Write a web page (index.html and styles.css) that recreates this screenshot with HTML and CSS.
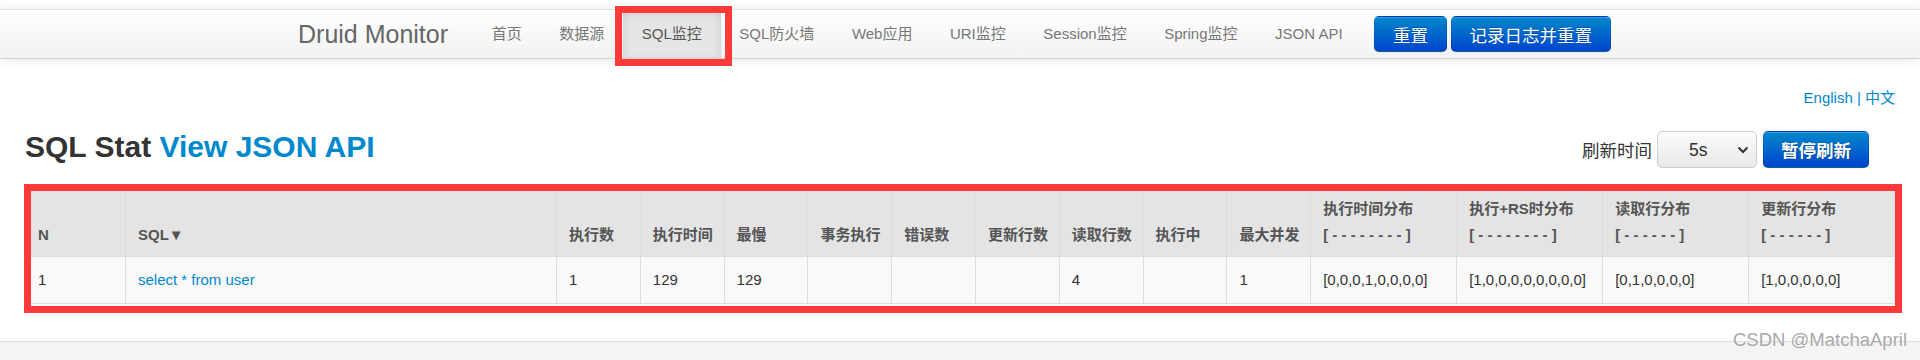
FILE: index.html
```html
<!DOCTYPE html>
<html lang="zh-CN">
<head>
<meta charset="utf-8">
<title>Druid Monitor</title>
<link rel="stylesheet" href="styles.css">
</head>
<body>
<div class="navbar">
  <div class="nav-container">
    <a class="brand" href="#">Druid Monitor</a>
    <ul class="nav">
      <li><a href="#">首页</a></li>
      <li><a href="#">数据源</a></li>
      <li class="active"><a href="#">SQL监控</a></li>
      <li><a href="#">SQL防火墙</a></li>
      <li><a href="#">Web应用</a></li>
      <li><a href="#">URI监控</a></li>
      <li><a href="#">Session监控</a></li>
      <li><a href="#">Spring监控</a></li>
      <li><a href="#">JSON API</a></li>
    </ul>
    <div class="nav-actions">
      <button class="btn btn-primary">重置</button>
      <button class="btn btn-primary">记录日志并重置</button>
    </div>
  </div>
</div>

<div class="content">
  <div class="lang"><a href="#">English</a> | <a href="#">中文</a></div>
  <div class="title-row">
    <h3 class="title">SQL Stat <a href="#">View JSON API</a></h3>
    <div class="refresh">
      <span class="refresh-label">刷新时间</span>
      <span class="select-wrap">
        <select class="select"><option>5s</option></select>
        <svg class="chevron" width="12" height="8" viewBox="0 0 12 8"><path d="M1.5 1.5 L6 6 L10.5 1.5" fill="none" stroke="#333" stroke-width="2"/></svg>
      </span>
      <button class="btn btn-primary btn-bold">暂停刷新</button>
    </div>
  </div>

  <table class="stat">
    <colgroup>
      <col class="c-n"><col class="c-sql">
      <col class="c-s"><col class="c-s"><col class="c-s"><col class="c-s"><col class="c-s"><col class="c-s"><col class="c-s"><col class="c-s"><col class="c-s">
      <col class="c-d"><col class="c-d"><col class="c-d"><col class="c-d">
    </colgroup>
    <thead>
      <tr>
        <th>N</th>
        <th>SQL▼</th>
        <th>执行数</th>
        <th>执行时间</th>
        <th>最慢</th>
        <th>事务执行</th>
        <th>错误数</th>
        <th>更新行数</th>
        <th>读取行数</th>
        <th>执行中</th>
        <th>最大并发</th>
        <th>执行时间分布<br>[ - - - - - - - - ]</th>
        <th>执行+RS时分布<br>[ - - - - - - - - ]</th>
        <th>读取行分布<br>[ - - - - - - ]</th>
        <th>更新行分布<br>[ - - - - - - ]</th>
      </tr>
    </thead>
    <tbody>
      <tr>
        <td>1</td>
        <td><a href="#">select * from user</a></td>
        <td>1</td>
        <td>129</td>
        <td>129</td>
        <td></td>
        <td></td>
        <td></td>
        <td>4</td>
        <td></td>
        <td>1</td>
        <td>[0,0,0,1,0,0,0,0]</td>
        <td>[1,0,0,0,0,0,0,0,0]</td>
        <td>[0,1,0,0,0,0]</td>
        <td>[1,0,0,0,0,0]</td>
      </tr>
    </tbody>
  </table>
</div>

<div class="footer"></div>

<div class="annot annot-nav"></div>
<div class="annot annot-table"></div>
<div class="watermark">CSDN @MatchaApril</div>
</body>
</html>
```

FILE: styles.css
```css
html, body {
  margin: 0;
  padding: 0;
}
body {
  font-family: "Liberation Sans", Arial, "Noto Sans CJK SC", sans-serif;
  color: #333;
  background: #fff;
  position: relative;
  height: 360px;
  overflow: hidden;
}
a {
  color: #0088cc;
  text-decoration: none;
}

/* navbar */
.navbar {
  margin-top: 9px;
  height: 48px;
  border-top: 1px solid #e3e3e3;
  border-bottom: 1px solid #d4d4d4;
  background: linear-gradient(#ffffff, #f2f2f2);
  box-shadow: 0 1px 10px rgba(0, 0, 0, 0.1);
}
.nav-container {
  width: 1324px;
  margin: 0 auto;
  height: 48px;
  display: flex;
  align-items: center;
}
.brand {
  font-size: 25px;
  color: #666;
  line-height: 48px;
  margin-right: 25px;
}
.nav {
  list-style: none;
  margin: 0;
  padding: 0;
  display: flex;
  height: 48px;
}
.nav a {
  display: block;
  padding: 0 18.75px;
  line-height: 48px;
  font-size: 15px;
  color: #777;
}
.nav .active a {
  background: #e5e5e5;
  color: #555;
  box-shadow: inset 0 3px 8px rgba(0, 0, 0, 0.125);
}
.nav-actions {
  display: flex;
  gap: 4px;
  margin-left: 13px;
}

/* buttons */
.btn {
  font-family: inherit;
  font-size: 17.5px;
  height: 36px;
  padding: 0 17.75px;
  border-radius: 5px;
  cursor: pointer;
}
.btn-primary {
  color: #fff;
  background: linear-gradient(#0088cc, #0044cc);
  border: 1px solid #0044cc;
  border-color: rgba(0, 0, 0, 0.1) rgba(0, 0, 0, 0.1) rgba(0, 0, 0, 0.25);
  text-shadow: 0 -1px 0 rgba(0, 0, 0, 0.25);
  box-shadow: inset 0 1px 0 rgba(255, 255, 255, 0.2), 0 1px 2px rgba(0, 0, 0, 0.05);
}
.btn-bold {
  height: 37px;
  font-weight: bold;
  padding: 0 17px;
  text-shadow: 0 0 1px rgba(0, 0, 0, 0.6);
}

/* content */
.content {
  padding: 0 25px;
}
.lang {
  margin-top: 29px;
  text-align: right;
  font-size: 15px;
  line-height: 20px;
  color: #0088cc;
}
.title-row {
  margin-top: 23px;
  height: 37px;
  display: flex;
  justify-content: space-between;
  align-items: flex-start;
}
.title {
  margin: 0;
  font-size: 30px;
  line-height: 31px;
  font-weight: bold;
  color: #333;
}
.refresh {
  display: flex;
  align-items: center;
  gap: 5px;
  margin-right: 26px;
}
.refresh-label {
  font-size: 17.5px;
  color: #333;
}
.select-wrap {
  position: relative;
  display: block;
  margin-right: 1px;
}
.select {
  appearance: none;
  -webkit-appearance: none;
  display: block;
  width: 100px;
  height: 37px;
  padding: 0 0 0 31px;
  font-family: inherit;
  font-size: 17.5px;
  color: #333;
  border: 1px solid #cccccc;
  border-radius: 5px;
  background: linear-gradient(#fbfbfb, #e9e9e9);
  box-shadow: inset 0 1px 0 rgba(255, 255, 255, 0.6);
}
.chevron {
  position: absolute;
  right: 8px;
  top: 15px;
  pointer-events: none;
}

/* table */
.stat {
  margin-top: 23px;
  width: 1870px;
  table-layout: fixed;
  border-collapse: collapse;
  font-size: 15px;
}
.c-n { width: 100px; }
.c-sql { width: 431px; }
.c-s { width: 83.8px; }
.c-d { width: 146px; }
.stat th,
.stat td {
  border: 1px solid #dddddd;
  text-align: left;
  line-height: 26px;
  white-space: nowrap;
  overflow: hidden;
}
.stat th {
  background: #e4e4e4;
  color: #555;
  font-weight: bold;
  vertical-align: bottom;
  padding: 4px 12px 8px;
}
.stat td {
  background: #f9f9f9;
  color: #333;
  padding: 10px 12px;
  vertical-align: middle;
}

/* footer */
.footer {
  margin-top: 37px;
  height: 30px;
  border-top: 1px solid #dedede;
  background: #f4f4f4;
}

/* red annotations */
.annot {
  position: absolute;
  border: 7px solid #fd3a3a;
  box-sizing: border-box;
  pointer-events: none;
}
.annot-nav {
  left: 615px;
  top: 6px;
  width: 117px;
  height: 60px;
}
.annot-table {
  left: 24px;
  top: 184px;
  width: 1878px;
  height: 129px;
}
.watermark {
  position: absolute;
  left: 1733px;
  top: 329px;
  font-size: 18.5px;
  color: #a8a8a8;
  text-shadow: 0 0 1px #fff;
  white-space: nowrap;
}
```
